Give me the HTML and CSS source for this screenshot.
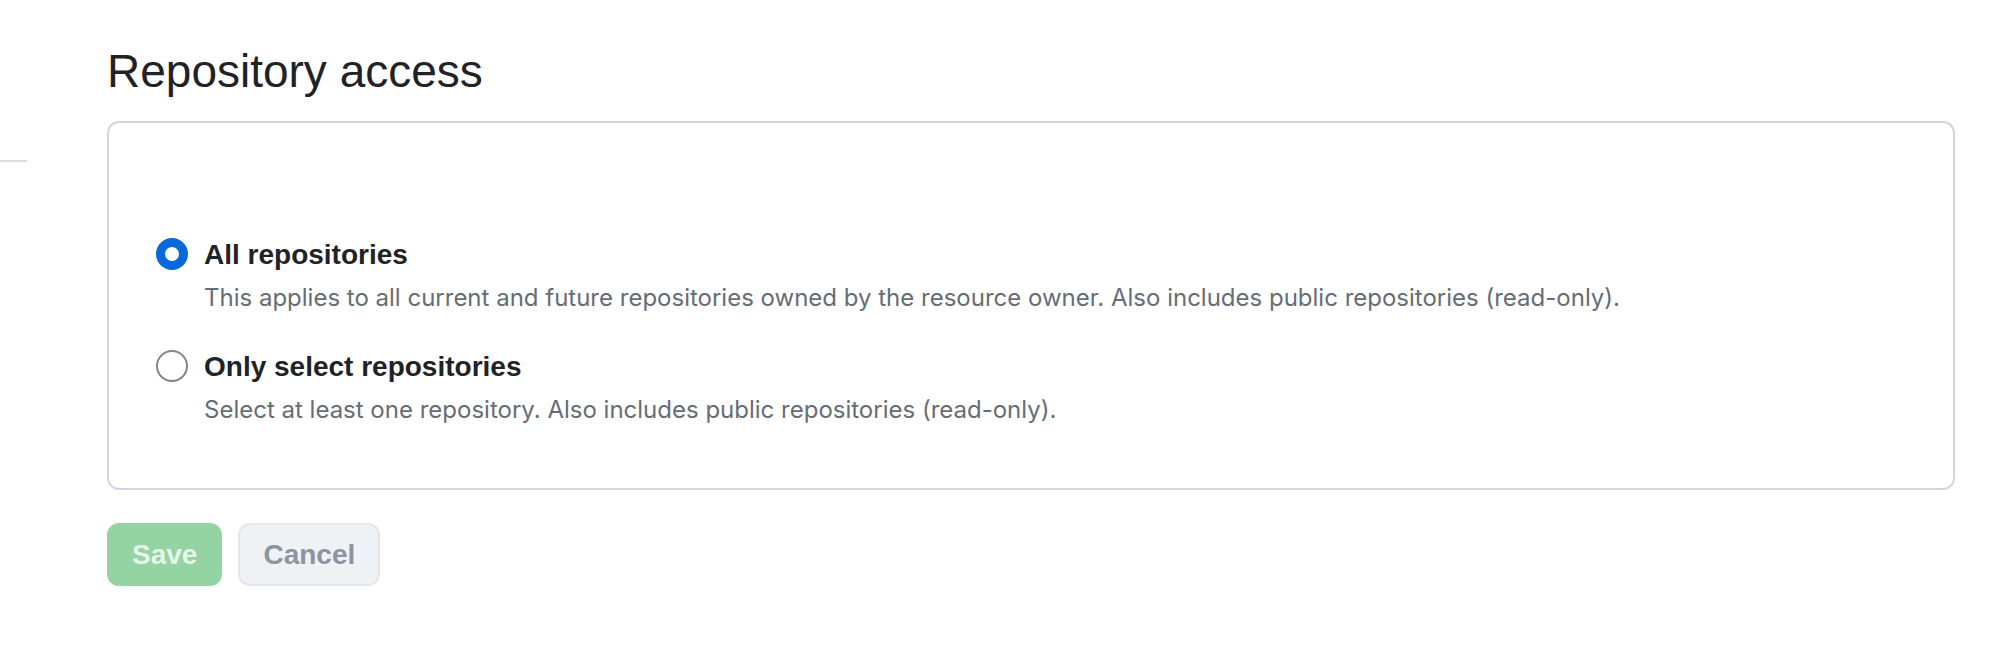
FILE: index.html
```html
<!DOCTYPE html>
<html lang="en">
<head>
    <meta charset="UTF-8">
    <meta name="viewport" content="width=device-width, initial-scale=1.0">
    <title>Repository access</title>
    <link rel="stylesheet" href="styles.css">
</head>
<body>
    <div class='side-rule'></div>
    <div id='container'>
        <h2 class='subhead'>Repository access</h2>
        <div class='box'>
            <label class='option'>
                <input type='radio' name='access' class='radio' checked>
                <span class='option-body'>
                    <span class='option-title'>All repositories</span>
                    <span class='option-note'>This applies to all current and future repositories owned by the resource owner. Also includes public repositories (read-only).</span>
                </span>
            </label>
            <label class='option'>
                <input type='radio' name='access' class='radio'>
                <span class='option-body'>
                    <span class='option-title'>Only select repositories</span>
                    <span class='option-note'>Select at least one repository. Also includes public repositories (read-only).</span>
                </span>
            </label>
        </div>
        <div class='actions'>
            <button class='btn btn-save' disabled>Save</button>
            <button class='btn btn-cancel' disabled>Cancel</button>
        </div>
    </div>
</body>
</html>
```

FILE: styles.css
```css
*{
    margin: 0;
    padding: 0;
    box-sizing: border-box;
}
body{
    font-family: "Liberation Sans", Arial, Helvetica, sans-serif;
    color: #1f2328;
    background: #ffffff;
}
.side-rule{
    position: absolute;
    left: 0;
    top: 160px;
    width: 27px;
    height: 2px;
    background-color: #d8dee4;
}
#container{
    display: flex;
    flex-direction: column;
    width: 1848px;
    margin-left: 107px;
    padding-top: 41px;
}
.subhead{
    font-size: 46px;
    font-weight: normal;
    line-height: 60px;
    margin-bottom: 20px;
}
.box{
    display: flex;
    flex-direction: column;
    gap: 31px;
    border: 2px solid #d0d7de;
    border-radius: 12px;
    padding: 112px 48px 60px 47px;
}
.option{
    display: flex;
    gap: 16px;
    cursor: pointer;
}
.radio{
    appearance: none;
    flex: none;
    width: 32px;
    height: 32px;
    margin-top: 3px;
    border: 2px solid #7d8590;
    border-radius: 50%;
    background-color: #ffffff;
}
.radio:checked{
    border: 9px solid #0969da;
}
.option-body{
    display: flex;
    flex-direction: column;
    gap: 5px;
}
.option-title{
    font-size: 28px;
    font-weight: bold;
    line-height: 40px;
}
.option-note{
    font-family: Inter, "Liberation Sans", sans-serif;
    font-size: 24px;
    line-height: 36px;
    color: #656d76;
}
.actions{
    display: flex;
    gap: 16px;
    margin-top: 33px;
}
.btn{
    font-family: inherit;
    font-size: 28px;
    font-weight: bold;
    height: 63px;
    padding: 0 23px;
    border-radius: 12px;
    border: 2px solid transparent;
}
.btn-save{
    color: rgba(255, 255, 255, 0.8);
    background-color: #94d3a2;
    border-color: #94d3a2;
}
.btn-cancel{
    color: #8c959f;
    background-color: #eff2f5;
    border-color: #e3e6ea;
}
```
